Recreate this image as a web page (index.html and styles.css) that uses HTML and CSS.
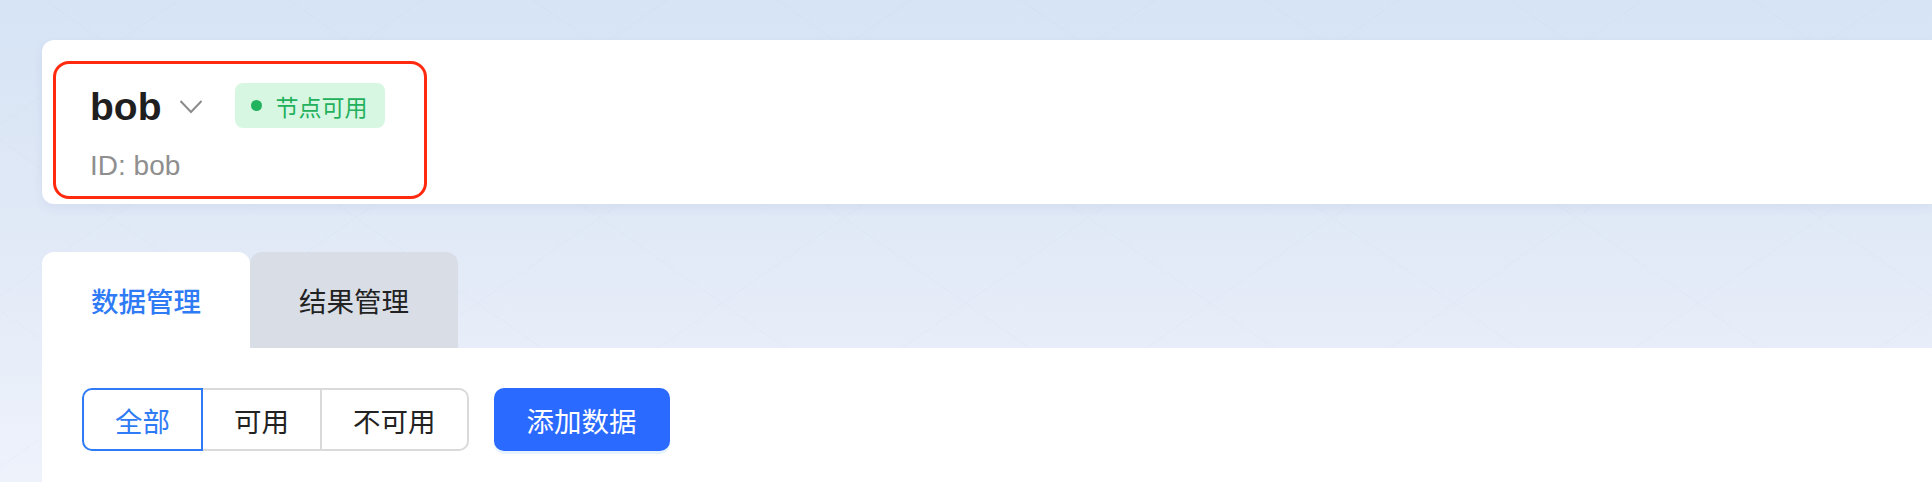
FILE: index.html
```html
<!DOCTYPE html>
<html lang="zh-CN">
<head>
<meta charset="utf-8">
<title>节点详情</title>
<link rel="stylesheet" href="styles.css">
</head>
<body>
<div class="page">
  <section class="node-card">
    <div class="node-info">
      <div class="node-title-row">
        <span class="node-name">bob</span>
        <svg class="chevron" width="24" height="16" viewBox="0 0 24 16" aria-hidden="true">
          <polyline points="1.5,3 12,14 22.5,3" fill="none" stroke="#8c8c8c" stroke-width="2" stroke-linejoin="miter"/>
        </svg>
        <span class="status-badge"><span class="status-dot"></span>节点可用</span>
      </div>
      <div class="node-id">ID: bob</div>
    </div>
  </section>

  <section class="tabs-card">
    <div class="tabs">
      <div class="tab tab-active">数据管理</div>
      <div class="tab">结果管理</div>
    </div>
    <div class="tab-panel">
      <div class="toolbar">
        <div class="segmented">
          <span class="seg seg-active">全部</span>
          <span class="seg">可用</span>
          <span class="seg">不可用</span>
        </div>
        <button class="btn-primary">添加数据</button>
      </div>
    </div>
  </section>
</div>
</body>
</html>
```
FILE: styles.css
```css
* { box-sizing: border-box; }

html, body {
  margin: 0;
  height: 482px;
  overflow: hidden;
}

body {
  font-family: "Liberation Sans", "Noto Sans CJK SC", sans-serif;
  color: #222;
  background:
    repeating-linear-gradient(35deg, rgba(120,150,200,0.035) 0 1px, transparent 1px 140px),
    repeating-linear-gradient(-35deg, rgba(120,150,200,0.035) 0 1px, transparent 1px 140px),
    linear-gradient(180deg, #d6e4f5 0%, #dfe8f6 40%, #e8eef9 75%, #eef2fb 100%);
}

.page {
  padding: 40px 0 0 42px;
}

/* top node card */
.node-card {
  background: #fff;
  height: 164px;
  border-radius: 12px 0 0 12px;
  padding: 21px 11px;
  box-shadow: 0 4px 12px rgba(40, 70, 130, 0.06);
}

.node-info {
  width: 374px;
  height: 138px;
  border: 3px solid #ff2a10;
  border-radius: 16px;
  padding: 19px 0 0 34px;
}

.node-title-row {
  display: flex;
  align-items: center;
  height: 45px;
}

.node-name {
  font-size: 39px;
  font-weight: 700;
  color: #1f1f1f;
  line-height: 45px;
  position: relative;
  top: 1px;
}

.chevron {
  margin-left: 18px;
  display: block;
}

.status-badge {
  margin-left: 32px;
  height: 45px;
  display: inline-flex;
  align-items: center;
  padding: 0 18px 0 16px;
  background: #d8f7e3;
  border-radius: 8px;
  color: #23b05b;
  font-family: "Noto Sans CJK SC", sans-serif;
  font-size: 23px;
}

.status-dot {
  width: 11px;
  height: 11px;
  border-radius: 50%;
  background: #22b35e;
  margin-right: 13px;
}

.node-id {
  margin-top: 21px;
  font-size: 28px;
  line-height: 34px;
  color: #8f8f8f;
}

/* tabs */
.tabs-card {
  margin-top: 48px;
}

.tabs {
  display: flex;
}

.tab {
  width: 208px;
  height: 96px;
  display: flex;
  align-items: center;
  justify-content: center;
  font-family: "Noto Sans CJK SC", sans-serif;
  font-size: 27.5px;
  color: #222;
  background: #d8dde6;
  border-radius: 12px 12px 0 0;
}

.tab-active {
  background: #fff;
  color: #2f7bf5;
  font-weight: 500;
}

.tab-panel {
  background: #fff;
  height: 200px;
  padding: 40px;
}

.toolbar {
  display: flex;
  align-items: center;
  gap: 25px;
}

.segmented {
  display: flex;
  height: 63px;
}

.seg {
  display: flex;
  align-items: center;
  justify-content: center;
  padding: 0 31px;
  font-family: "Noto Sans CJK SC", sans-serif;
  font-size: 27.5px;
  color: #222;
  border: 2px solid #dadada;
  border-left-width: 0;
}

.seg:first-child {
  border-left-width: 2px;
  border-radius: 10px 0 0 10px;
}

.seg:last-child {
  border-radius: 0 10px 10px 0;
}

.seg-active {
  color: #2f7bf5;
  border-color: #2f7bf5;
}

.btn-primary {
  height: 63px;
  padding: 0 33px;
  border: none;
  border-radius: 10px;
  background: #2b6aff;
  color: #fff;
  font-family: "Noto Sans CJK SC", sans-serif;
  font-size: 27.5px;
  box-shadow: 0 3px 0 rgba(5, 145, 255, 0.1);
  cursor: pointer;
}
```
